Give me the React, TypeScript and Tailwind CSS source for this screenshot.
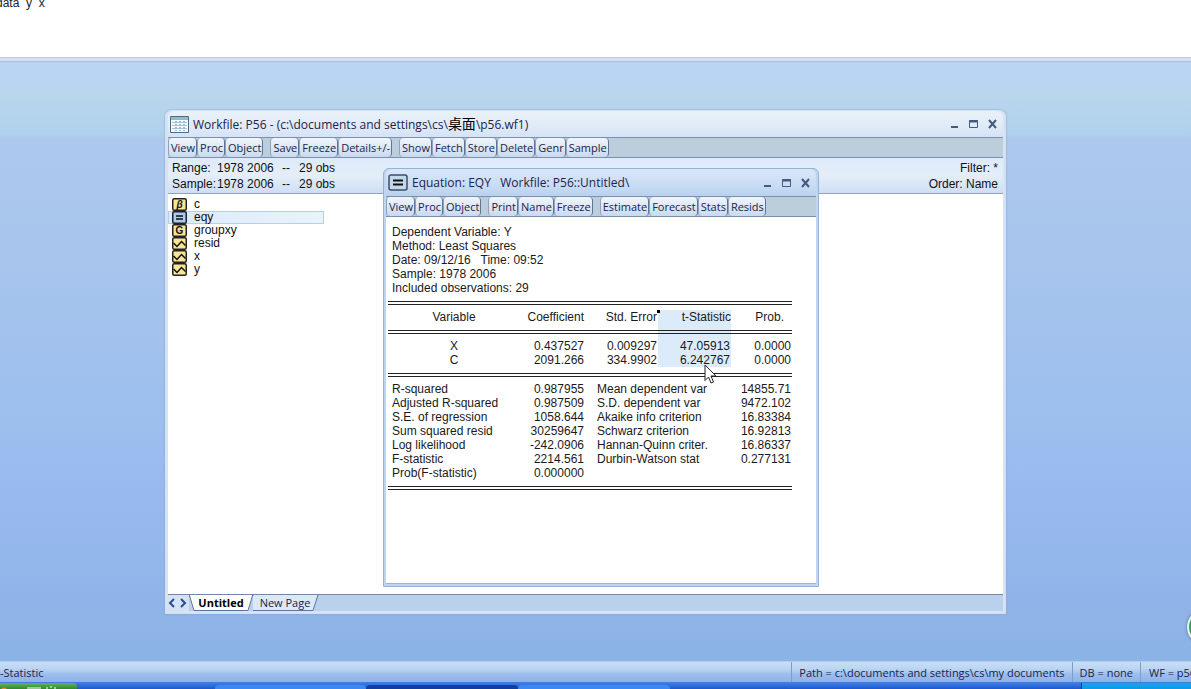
import type { ReactNode } from "react";

type Rows = string[][];

const workfileTools = [
  ["View", "Proc", "Object"],
  ["Save", "Freeze", "Details+/-"],
  ["Show", "Fetch", "Store", "Delete", "Genr", "Sample"],
];

const equationTools = [
  ["View", "Proc", "Object"],
  ["Print", "Name", "Freeze"],
  ["Estimate", "Forecast", "Stats", "Resids"],
];

const workfileObjects = [
  { name: "c", kind: "coef" },
  { name: "eqy", kind: "equation" },
  { name: "groupxy", kind: "group" },
  { name: "resid", kind: "series" },
  { name: "x", kind: "series" },
  { name: "y", kind: "series" },
];

const summary = [
  "Dependent Variable: Y",
  "Method: Least Squares",
  "Date: 09/12/16   Time: 09:52",
  "Sample: 1978 2006",
  "Included observations: 29",
];

const coefficients: Rows = [
  ["X", "0.437527", "0.009297", "47.05913", "0.0000"],
  ["C", "2091.266", "334.9902", "6.242767", "0.0000"],
];

const statistics: Rows = [
  ["R-squared", "0.987955", "Mean dependent var", "14855.71"],
  ["Adjusted R-squared", "0.987509", "S.D. dependent var", "9472.102"],
  ["S.E. of regression", "1058.644", "Akaike info criterion", "16.83384"],
  ["Sum squared resid", "30259647", "Schwarz criterion", "16.92813"],
  ["Log likelihood", "-242.0906", "Hannan-Quinn criter.", "16.86337"],
  ["F-statistic", "2214.561", "Durbin-Watson stat", "0.277131"],
  ["Prob(F-statistic)", "0.000000", "", ""],
];

export default function App() {
  return (
    <div className="flex h-screen flex-col overflow-hidden bg-white font-['Open_Sans','Noto_Sans_CJK_SC',sans-serif] text-[11px] text-[#22224a]">
      <CommandWindow />
      <main className="relative flex-1 overflow-hidden bg-[linear-gradient(#bbd4f6_0%,#bad4f3_4%,#bad6ec_5%,#b0d1ee_12%,#adc8ee_13%,#a6c4ec_36%,#9cbfee_60%,#98b9ef_72%,#90b4e9_90%,#8bb3e5_100%)]">
        <WorkfileWindow />
        <EquationWindow />
        <Pointer />
        <span className="absolute -right-8 bottom-4 size-9 rounded-full border-2 border-[#e6f3ea] bg-[#35a04b] shadow-[0_0_3px_#52688f]" />
      </main>
      <StatusBar />
      <Taskbar />
    </div>
  );
}

function CommandWindow() {
  return (
    <div className="h-[62px] overflow-hidden border-b border-[#a9bfdc] bg-[#d5e1f2]">
      <div className="-mt-1 border-b border-[#bfcadb] bg-white">
        <textarea
          aria-label="Command"
          defaultValue="data  y  x"
          spellCheck={false}
          className="-ml-1 block h-[61px] w-full resize-none font-['Liberation_Sans',sans-serif] text-xs leading-[14px] text-[#222] outline-none"
        />
      </div>
    </div>
  );
}

function WorkfileWindow() {
  return (
    <section className="absolute top-12 right-[185px] bottom-[47px] left-[165px] flex flex-col rounded-t-md border border-[#d3e0f0] bg-[#d6e3f5] px-0.5 pb-0.5 shadow-[0_0_2px_#7f9cc6]">
      <TitleBar
        title={
          <>
            Workfile: P56 - (c:\documents and settings\cs\<span className="text-sm leading-5 text-black">桌面</span>\p56.wf1)
          </>
        }
        icon={<WorkfileIcon />}
        tone="h-[26px] bg-[linear-gradient(#e9f1f7,#e2ecf8_50%,#d6e3f5)]"
      />
      <Toolbar groups={workfileTools} />
      <div className="flex justify-between border-b border-[#94a3b8] bg-[linear-gradient(#dfeafa,#e3eef8_50%,#cfdef5)] px-1 pt-0.5 pb-px font-['Liberation_Sans',sans-serif] text-xs leading-4 text-[#111]">
        <div>
          <InfoRow label="Range:" />
          <InfoRow label="Sample:" />
        </div>
        <div className="pr-px text-right">
          <p>Filter: *</p>
          <p>Order: Name</p>
        </div>
      </div>
      <ul className="flex-1 bg-white pt-1 font-['Liberation_Sans',sans-serif] text-xs leading-[11px] text-[#111]">
        {workfileObjects.map((item) => (
          <li
            key={item.name}
            className={
              item.kind === "equation"
                ? "flex w-[156px] items-center gap-[7px] border border-[#b5d0e8] bg-[linear-gradient(90deg,#dceafa,#eaf3fc)] pl-[3px]"
                : "flex w-[156px] items-center gap-[7px] border border-transparent pl-[3px]"
            }
          >
            <ObjectIcon kind={item.kind} />
            {item.name}
          </li>
        ))}
      </ul>
      <PageTabs />
    </section>
  );
}

function InfoRow({ label }: { label: string }) {
  return (
    <p className="flex">
      <span className="w-[45px]">{label}</span>
      <span className="w-[65px]">1978 2006</span>
      <span className="w-[17px]">--</span>
      <span>29 obs</span>
    </p>
  );
}

function EquationWindow() {
  return (
    <section className="absolute top-[106px] left-[383px] rounded-t-md border border-[#93b4d6] bg-[#bfd6f0] px-0.5 pb-0.5">
      <TitleBar
        title={
          <span className="whitespace-pre">{"Equation: EQY   Workfile: P56::Untitled\\"}</span>
        }
        icon={<EquationIcon />}
        tone="h-[27px] bg-[linear-gradient(#dbe7f8,#c9dcf5_60%,#b9d1ee)]"
      />
      <Toolbar groups={equationTools} />
      <div className="border-b border-[#9ab6d4] bg-white pt-2 pr-6 pb-[88px] pl-0.5 font-['Liberation_Sans',sans-serif] text-xs leading-[14px] text-[#1a1a1a]">
        {summary.map((line) => (
          <p key={line} className="pl-1 whitespace-pre">{line}</p>
        ))}
        <EstimateTable />
      </div>
    </section>
  );
}

function EstimateTable() {
  return (
    <table className="w-[404px] table-fixed border-separate border-spacing-0">
      <colgroup>
        <col className="w-[132px]" />
        <col className="w-[65px]" />
        <col className="w-[73px]" />
        <col className="w-[73px]" />
        <col className="w-[61px]" />
      </colgroup>
      <tbody>
        <RuleRow />
        <tr className="text-right">
          <th className="text-center font-normal">Variable</th>
          <th className="pr-px font-normal">Coefficient</th>
          <th className="relative pr-px font-normal">
            Std. Error
            <span className="absolute top-0 -right-0.5 size-[3px] bg-black" />
          </th>
          <th className="bg-[#dcebfa] font-normal">t-Statistic</th>
          <th className="pr-2 font-normal">Prob.</th>
        </tr>
        <RuleRow selected />
        {coefficients.map(([name, coef, error, t, prob]) => (
          <tr key={name} className="text-right">
            <td className="text-center">{name}</td>
            <td className="pr-px">{coef}</td>
            <td className="pr-px">{error}</td>
            <td className="bg-[#dcebfa] pr-px">{t}</td>
            <td className="pr-px">{prob}</td>
          </tr>
        ))}
        <RuleRow />
        {statistics.map(([left, leftValue, right, rightValue]) => (
          <tr key={left}>
            <td className="pl-1">{left}</td>
            <td className="pr-px text-right">{leftValue}</td>
            <td colSpan={2} className="pl-3">{right}</td>
            <td className="pr-px text-right">{rightValue}</td>
          </tr>
        ))}
        <RuleRow />
      </tbody>
    </table>
  );
}

// Double rule between the table blocks; the selected column keeps its tint.
function RuleRow({ selected = false }: { selected?: boolean }) {
  return (
    <tr>
      {[0, 1, 2, 3, 4].map((column) => (
        <td
          key={column}
          className={selected && column === 3 ? "h-[15px] bg-[#dcebfa] pt-1.5 pb-[5px]" : "h-[15px] pt-1.5 pb-[5px]"}
        >
          <div className="h-1 border-y border-[#222]" />
        </td>
      ))}
    </tr>
  );
}

function TitleBar({ title, icon, tone }: { title: ReactNode; icon: ReactNode; tone: string }) {
  return (
    <header className={`flex items-center rounded-t-md pr-1.5 pl-0.5 ${tone}`}>
      {icon}
      <h2 className="flex-1 pl-1 text-xs leading-5 whitespace-nowrap">{title}</h2>
      <div className="flex gap-[9px] text-[#47597c]">
        <button type="button" aria-label="Minimize">
          <svg width="10" height="10" viewBox="0 0 10 10"><path d="M2 8h7" stroke="currentColor" strokeWidth="2" /></svg>
        </button>
        <button type="button" aria-label="Maximize">
          <svg width="10" height="10" viewBox="0 0 10 10" fill="none" stroke="currentColor">
            <path d="M1.5 1.5h8v7h-8z" />
            <path d="M1 2.5h9" strokeWidth="2" />
          </svg>
        </button>
        <button type="button" aria-label="Close">
          <svg width="10" height="10" viewBox="0 0 10 10"><path d="M2 1l7 8M9 1l-7 8" stroke="currentColor" strokeWidth="2" /></svg>
        </button>
      </div>
    </header>
  );
}

function Toolbar({ groups }: { groups: string[][] }) {
  return (
    <div className="flex h-[21px] gap-[7px] border-y border-[#7c90ad] bg-[#bccddc]">
      {groups.map((group) => (
        <div key={group.join()} className="flex">
          {group.map((label) => (
            <button
              key={label}
              type="button"
              className="rounded-sm border-r border-l border-r-[#5f7596] border-l-[#8ea3bf] bg-[linear-gradient(#f0f5fb,#dde8f5_50%,#c9daef)] pr-px pl-0.5 leading-[18px]"
            >
              {label}
            </button>
          ))}
        </div>
      ))}
    </div>
  );
}

function PageTabs() {
  return (
    <nav className="flex h-[17px] items-stretch border-t border-[#7188a8] bg-[#b9d1ed]">
      <button type="button" aria-label="Previous page" className="w-[11px] bg-[#d3e2f5]">
        <svg width="9" height="10" viewBox="0 0 9 10" fill="none" stroke="#2b4c94" strokeWidth="2"><path d="M6 1L2 5 6 9" /></svg>
      </button>
      <button type="button" aria-label="Next page" className="w-[10px] bg-[#d3e2f5]">
        <svg width="9" height="10" viewBox="0 0 9 10" fill="none" stroke="#2b4c94" strokeWidth="2"><path d="M2 1L6 5 2 9" /></svg>
      </button>
      <button type="button" className="relative w-16 text-[11px] leading-4 font-bold text-black">
        <svg className="absolute inset-0" width="66" height="16" viewBox="0 0 66 16">
          <path d="M0-1L5 15.500H59L64-1z" fill="#fff" stroke="#5f7596" />
        </svg>
        <span className="relative">Untitled</span>
      </button>
      <button type="button" className="relative w-16 leading-4">
        <svg className="absolute inset-0" width="66" height="16" viewBox="0 0 66 16">
          <path d="M0 0L-3 10L-1 15.500H60L65 0" fill="#d9e9f8" stroke="#5f7596" />
        </svg>
        <span className="relative">New Page</span>
      </button>
    </nav>
  );
}

function Pointer() {
  return (
    <svg className="absolute top-[302px] left-[704px]" width="13" height="21" viewBox="0 0 13 21">
      <path d="M1 1v15.500l3.500-3.500 2.500 6 2.500-1-2.500-6h5z" fill="#fff" stroke="#222" />
    </svg>
  );
}

function StatusBar() {
  return (
    <footer className="flex h-[21px] border-t border-[#b4cdea] bg-[linear-gradient(#c9ddf8,#bdd6f2_30%,#a9cbee_50%,#9cbdee_60%,#8eb2ea)] leading-[22px] whitespace-nowrap">
      <span className="-ml-1 flex-1">t-Statistic</span>
      <span className="border-l border-[#7f9dc9] px-[7px]">Path = c:\documents and settings\cs\my documents</span>
      <span className="border-l border-[#7f9dc9] px-[7px]">DB = none</span>
      <span className="w-[51px] overflow-hidden border-l border-[#7f9dc9] pl-2">WF = p56</span>
    </footer>
  );
}

function Taskbar() {
  return (
    <div className="flex h-[7px] border-t border-[#3d7bdc] bg-[linear-gradient(#3a80e6,#1f57cf)]">
      <div className="w-[77px] rounded-tr-sm bg-[linear-gradient(#66b35e,#2f8a2c)]">
        <svg width="77" height="6" viewBox="0 0 77 6">
          <path d="M1 6q3-3 6 0z" fill="#f08a2c" />
          <path d="M27 5h14M47 4v2M50 4h2M55 4v2" stroke="#fff" />
        </svg>
      </div>
      <div className="w-[138px]" />
      <div className="mt-0.5 w-[151px] rounded-t-sm bg-[#3c88f4]" />
      <div className="mt-0.5 w-[152px] rounded-t-sm bg-[#123f9c]" />
      <div className="mt-0.5 w-[152px] rounded-t-sm bg-[#3c88f4]" />
      <div className="flex-1" />
      <div className="w-[110px] border-l border-[#0b3f8f] bg-[linear-gradient(#1ba0ee,#0f9ae8)]" />
    </div>
  );
}

function WorkfileIcon() {
  return (
    <svg width="19" height="17" viewBox="0 0 19 17">
      <path d="M.5.5h18v16H.5z" fill="#f3f8fb" stroke="#4d6a86" />
      <path d="M1 1h17v3H1z" fill="#8fbccb" />
      <path d="M2 6.500h3M7 6.500h2M11 6.500h2M15 6.500h2M2 9.500h3M7 9.500h2M11 9.500h2M15 9.500h2M2 12.500h3M7 12.500h2M11 12.500h2M15 12.500h2" stroke="#a9c6df" />
      <path d="M6 5v10M10 5v10M14 5v10" stroke="#4a7db0" strokeDasharray="2 1" />
    </svg>
  );
}

function EquationIcon() {
  return (
    <svg width="20" height="17" viewBox="0 0 20 17">
      <rect x="1" y="1" width="18" height="15" rx="2" fill="#c3d8ef" stroke="#3f4c62" strokeWidth="1.500" />
      <path d="M5 6.500h10M5 10.500h10" stroke="#111" strokeWidth="2" />
    </svg>
  );
}

function ObjectIcon({ kind }: { kind: string }) {
  return (
    <svg width="15" height="13" viewBox="0 0 15 13" className="-my-px">
      <rect x=".75" y=".75" width="13.500" height="11.500" rx="1.500" fill={kind === "equation" ? "#a9cdf0" : "#f9e596"} stroke="#222" strokeWidth="1.500" />
      {kind === "equation" && <path d="M4 5h7M4 8h7" stroke="#111" strokeWidth="1.500" />}
      {kind === "series" && <path d="M1.500 6L5 9.500 9.500 4.500 13.500 8.500" fill="none" stroke="#111" strokeWidth="1.500" />}
      {kind === "group" && (
        <text x="7.500" y="10" textAnchor="middle" fontSize="10" fontWeight="bold" fill="#111">G</text>
      )}
      {kind === "coef" && (
        <text x="7.500" y="9.500" textAnchor="middle" fontSize="10" fontWeight="bold" fontStyle="italic" fill="#111">β</text>
      )}
    </svg>
  );
}
